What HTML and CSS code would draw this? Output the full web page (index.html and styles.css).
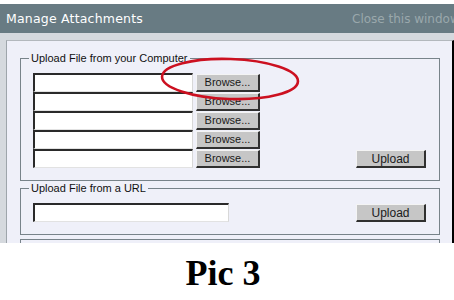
FILE: index.html
```html
<!DOCTYPE html>
<html lang="en">
  <head>
    <meta charset="UTF-8" />
    <title>Manage Attachments</title>
    <link rel="stylesheet" href="styles.css">
  </head>
  <body>
    <div class="window">
      <div class="titlebar">
        <span class="title">Manage Attachments</span>
        <a class="close-link">Close this window</a>
      </div>

      <div class="frame">
        <div class="panel">
          <fieldset class="group">
            <legend>Upload File from your Computer</legend>
            <div class="group-body">
              <div class="file-rows">
                <div class="file-row">
                  <input class="text-input" type="text" />
                  <button class="btn">Browse...</button>
                </div>
                <div class="file-row">
                  <input class="text-input" type="text" />
                  <button class="btn">Browse...</button>
                </div>
                <div class="file-row">
                  <input class="text-input" type="text" />
                  <button class="btn">Browse...</button>
                </div>
                <div class="file-row">
                  <input class="text-input" type="text" />
                  <button class="btn">Browse...</button>
                </div>
                <div class="file-row">
                  <input class="text-input" type="text" />
                  <button class="btn">Browse...</button>
                </div>
              </div>
              <button class="btn upload-btn">Upload</button>
            </div>
          </fieldset>

          <fieldset class="group">
            <legend>Upload File from a URL</legend>
            <div class="group-body">
              <input class="text-input url-input" type="text" />
              <button class="btn upload-btn">Upload</button>
            </div>
          </fieldset>

          <fieldset class="group group-last"></fieldset>
        </div>

        <!-- red annotation circle round the first Browse button -->
        <svg class="annotation" width="160" height="60" viewBox="0 0 160 60">
          <ellipse cx="80" cy="30" rx="68" ry="20" fill="none"
            stroke="#cc1020" stroke-width="2.6" transform="rotate(2 80 30)" />
        </svg>
      </div>
    </div>

    <p class="caption">Pic 3</p>
  </body>
</html>
```

FILE: styles.css
```css
body {
  margin: 0;
  background: white;
  width: 454px;
  overflow: hidden;
}
.window {
  padding-top: 4px;
}
.titlebar {
  display: flex;
  align-items: center;
  height: 29px;
  padding-left: 6px;
  background: #687b83;
  white-space: nowrap;
  overflow: hidden;
  font-family: "DejaVu Sans", Verdana, sans-serif;
}
.title {
  flex: 0 0 346px;
  color: #ffffff;
  font-size: 12.5px;
  letter-spacing: 0.2px;
}
.close-link {
  flex-shrink: 0;
  color: #9aa8ac;
  font-size: 12px;
}
.frame {
  position: relative;
  height: 210px;
  padding: 7px 0 0 6px;
  background: #d5d9de;
  box-sizing: border-box;
  overflow: hidden;
}
.panel {
  height: 100%;
  padding: 11px 12px 0 13px;
  background: #eff0f9;
  border-top: 1px solid #b3b8bd;
  border-left: 1px solid #9ea5ab;
  border-right: 2px solid #000;
  box-sizing: border-box;
}
.group {
  margin: 0 0 1px 0;
  padding: 9px 13px 12px 12px;
  border: 1px solid #78838a;
  font-family: "Liberation Sans", Arial, sans-serif;
}
.group legend {
  margin-left: -4px;
  padding: 0 2px;
  font-size: 11px;
  color: #111;
}
.group-last {
  margin-top: 4px;
  height: 30px;
}
.group-body {
  display: flex;
  align-items: flex-end;
  justify-content: space-between;
}
.file-rows {
  display: flex;
  flex-direction: column;
}
.file-row {
  display: flex;
  align-items: center;
  gap: 3px;
  height: 19px;
}
.text-input {
  width: 160px;
  height: 19px;
  margin: 0;
  padding: 0 2px;
  background: white;
  border-top: 2px solid #2a2a2a;
  border-left: 2px solid #2a2a2a;
  border-right: 1px solid #d8d8d8;
  border-bottom: 1px solid #e2e2e2;
  box-sizing: border-box;
  outline: none;
}
.url-input {
  width: 196px;
}
.btn {
  width: 64px;
  height: 18px;
  margin: 0;
  padding: 0;
  background: #c6c6c6;
  border-top: 1px solid #f4f4f4;
  border-left: 1px solid #f4f4f4;
  border-right: 2px solid #303030;
  border-bottom: 2px solid #303030;
  box-sizing: border-box;
  font-family: "Liberation Sans", Arial, sans-serif;
  font-size: 11px;
  color: #1a1a1a;
  line-height: 14px;
}
.upload-btn {
  width: 70px;
  font-size: 12px;
}
.annotation {
  position: absolute;
  left: 150px;
  top: 16px;
}
.caption {
  margin: 0;
  padding: 10px 8px 0 0;
  text-align: center;
  font-family: "Liberation Serif", "Times New Roman", serif;
  font-weight: bold;
  font-size: 36px;
  line-height: 40px;
  color: #000;
}
```
